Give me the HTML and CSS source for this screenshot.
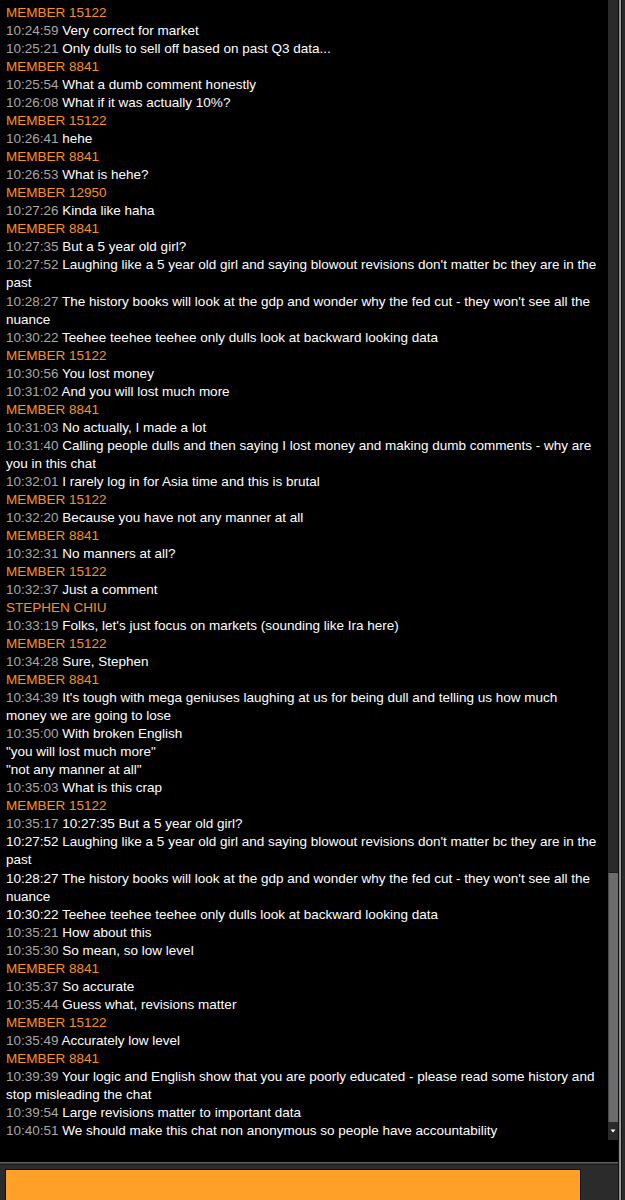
FILE: index.html
```html
<!DOCTYPE html>
<html lang="en">
<head>
<meta charset="utf-8">
<title>Chat</title>
<link rel="stylesheet" href="styles.css">
</head>
<body>
<div class="app">
  <div class="main">
    <div class="chat">
      <div class="messages">
        <div class="name">MEMBER 15122</div>
        <div class="msg"><span class="time">10:24:59</span> Very correct for market</div>
        <div class="msg"><span class="time">10:25:21</span> Only dulls to sell off based on past Q3 data...</div>
        <div class="name">MEMBER 8841</div>
        <div class="msg"><span class="time">10:25:54</span> What a dumb comment honestly</div>
        <div class="msg"><span class="time">10:26:08</span> What if it was actually 10%?</div>
        <div class="name">MEMBER 15122</div>
        <div class="msg"><span class="time">10:26:41</span> hehe</div>
        <div class="name">MEMBER 8841</div>
        <div class="msg"><span class="time">10:26:53</span> What is hehe?</div>
        <div class="name">MEMBER 12950</div>
        <div class="msg"><span class="time">10:27:26</span> Kinda like haha</div>
        <div class="name">MEMBER 8841</div>
        <div class="msg"><span class="time">10:27:35</span> But a 5 year old girl?</div>
        <div class="msg"><span class="time">10:27:52</span> Laughing like a 5 year old girl and saying blowout revisions don't matter bc they are in the past</div>
        <div class="msg"><span class="time">10:28:27</span> The history books will look at the gdp and wonder why the fed cut - they won't see all the nuance</div>
        <div class="msg"><span class="time">10:30:22</span> Teehee teehee teehee only dulls look at backward looking data</div>
        <div class="name">MEMBER 15122</div>
        <div class="msg"><span class="time">10:30:56</span> You lost money</div>
        <div class="msg"><span class="time">10:31:02</span> And you will lost much more</div>
        <div class="name">MEMBER 8841</div>
        <div class="msg"><span class="time">10:31:03</span> No actually, I made a lot</div>
        <div class="msg"><span class="time">10:31:40</span> Calling people dulls and then saying I lost money and making dumb comments - why are you in this chat</div>
        <div class="msg"><span class="time">10:32:01</span> I rarely log in for Asia time and this is brutal</div>
        <div class="name">MEMBER 15122</div>
        <div class="msg"><span class="time">10:32:20</span> Because you have not any manner at all</div>
        <div class="name">MEMBER 8841</div>
        <div class="msg"><span class="time">10:32:31</span> No manners at all?</div>
        <div class="name">MEMBER 15122</div>
        <div class="msg"><span class="time">10:32:37</span> Just a comment</div>
        <div class="name">STEPHEN CHIU</div>
        <div class="msg"><span class="time">10:33:19</span> Folks, let's just focus on markets (sounding like Ira here)</div>
        <div class="name">MEMBER 15122</div>
        <div class="msg"><span class="time">10:34:28</span> Sure, Stephen</div>
        <div class="name">MEMBER 8841</div>
        <div class="msg"><span class="time">10:34:39</span> It's tough with mega geniuses laughing at us for being dull and telling us how much money we are going to lose</div>
        <div class="msg"><span class="time">10:35:00</span> With broken English<br>"you will lost much more"<br>"not any manner at all"</div>
        <div class="msg"><span class="time">10:35:03</span> What is this crap</div>
        <div class="name">MEMBER 15122</div>
        <div class="msg"><span class="time">10:35:17</span> 10:27:35 But a 5 year old girl?<br>10:27:52 Laughing like a 5 year old girl and saying blowout revisions don't matter bc they are in the past<br>10:28:27 The history books will look at the gdp and wonder why the fed cut - they won't see all the nuance<br>10:30:22 Teehee teehee teehee only dulls look at backward looking data</div>
        <div class="msg"><span class="time">10:35:21</span> How about this</div>
        <div class="msg"><span class="time">10:35:30</span> So mean, so low level</div>
        <div class="name">MEMBER 8841</div>
        <div class="msg"><span class="time">10:35:37</span> So accurate</div>
        <div class="msg"><span class="time">10:35:44</span> Guess what, revisions matter</div>
        <div class="name">MEMBER 15122</div>
        <div class="msg"><span class="time">10:35:49</span> Accurately low level</div>
        <div class="name">MEMBER 8841</div>
        <div class="msg"><span class="time">10:39:39</span> Your logic and English show that you are poorly educated - please read some history and stop misleading the chat</div>
        <div class="msg"><span class="time">10:39:54</span> Large revisions matter to important data</div>
        <div class="msg"><span class="time">10:40:51</span> We should make this chat non anonymous so people have accountability</div>
      </div>
      <div class="scrollbar">
        <div class="track"></div>
        <div class="thumb"></div>
        <div class="arrow">
          <svg width="10" height="18" viewBox="0 0 10 18"><polygon points="2.5,7.5 7.5,7.5 5,10.5" fill="#ffffff"/></svg>
        </div>
      </div>
    </div>
    <div class="divider"></div>
    <div class="composer">
      <div class="input"></div>
    </div>
  </div>
  <div class="edge"></div>
</div>
</body>
</html>
```

FILE: styles.css
```css
html, body {
  margin: 0;
  padding: 0;
  background: #000;
}

.app {
  display: flex;
  width: 625px;
  height: 1200px;
  overflow: hidden;
}

.main {
  flex: 1;
  display: flex;
  flex-direction: column;
  min-width: 0;
}

.chat {
  height: 1162px;
  display: flex;
  background: #000;
}

.messages {
  flex: 1;
  min-width: 0;
  padding: 4px 9px 0 6px;
  font-family: "Liberation Sans", Arial, sans-serif;
  font-size: 13.5px;
  line-height: 18.03px;
  color: #ffffff;
  overflow: hidden;
}

.name {
  color: #f7931e;
}

.msg {
  color: #ffffff;
}

.time {
  color: #a8a8a8;
}

.scrollbar {
  width: 10px;
  height: 1140px;
  display: flex;
  flex-direction: column;
  background: #2a2a2a;
}

.track {
  flex: 1;
}

.thumb {
  height: 250px;
  background: #6c6c6c;
  border-top: 1px solid #1c1c1c;
  border-left: 1px solid #4a4a4a;
  box-sizing: border-box;
}

.arrow {
  height: 18px;
  background: #2a2a2a;
  display: flex;
}

.divider {
  height: 3px;
  background: linear-gradient(to bottom, #616161 0 1px, #3a3a3a 1px 2px, #1c1c1c 2px 3px);
}

.composer {
  flex: 1;
  background: #2b2b2b;
  padding: 4px 37px 0 5px;
  display: flex;
}

.input {
  flex: 1;
  background: #ffa128;
  border: 1px solid #111;
  border-bottom: none;
}

.edge {
  width: 7px;
  background: linear-gradient(to right, #111 0 1px, #8a8a8a 1px 2px, #a0a0a0 2px 3px, #111 3px 4px, #2a2a2a 4px);
}
```
